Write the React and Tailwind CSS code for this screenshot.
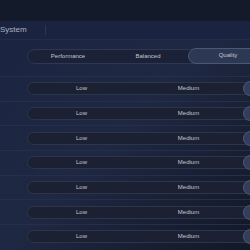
import React from 'react'

const rows = Array.from({ length: 7 })

function App() {
  return (
    <div
      className="w-[250px] h-[250px] overflow-hidden bg-gradient-to-br from-[#1a2440] via-[#1f2843] to-[#121826] text-[#c2c7d2]"
      style={{ fontFamily: '"Liberation Sans", Arial, sans-serif' }}
    >
      {/* top strip */}
      <div className="h-[21px] bg-[#131a29]" />

      {/* Header */}
      <div className="h-[19px] flex items-center bg-[#1a2440] border-b border-[#222d47]">
        <span className="ml-0 text-[8px] text-[#aab1c0] w-[45px]">System</span>
        <div className="w-px h-[10px] bg-[#2c3750]" />
      </div>

      {/* Preset selector */}
      <div className="mt-[9px] ml-[27px] w-[260px] h-[15px] flex items-center rounded-full bg-[#1b2136] border border-[#2e3852] text-[6px] font-medium">
        <div className="w-[80px] text-center">Performance</div>
        <div className="w-[80px] text-center">Balanced</div>
        <div className="w-[80px] h-[16px] -mt-[2px] flex items-center justify-center rounded-full bg-[#2d3854] border border-[#4a5775]">
          Quality
        </div>
      </div>

      {/* Setting rows */}
      <div className="mt-[12px] flex flex-col">
        {rows.map((_, i) => (
          <div key={i} className="h-[24.7px] border-t border-[#262f49] flex items-center">
            <div className="ml-[27px] w-[300px] h-[13px] flex items-center rounded-full bg-[#1b2033] border border-[#2c3549] text-[6px]">
              <div className="w-[107px] text-center">Low</div>
              <div className="w-[107px] text-center">Medium</div>
              <div className="ml-[1px] w-[60px] h-[15px] rounded-full bg-[#323e5c] border border-[#4d5a78]" />
            </div>
          </div>
        ))}
      </div>
    </div>
  )
}

export default App
